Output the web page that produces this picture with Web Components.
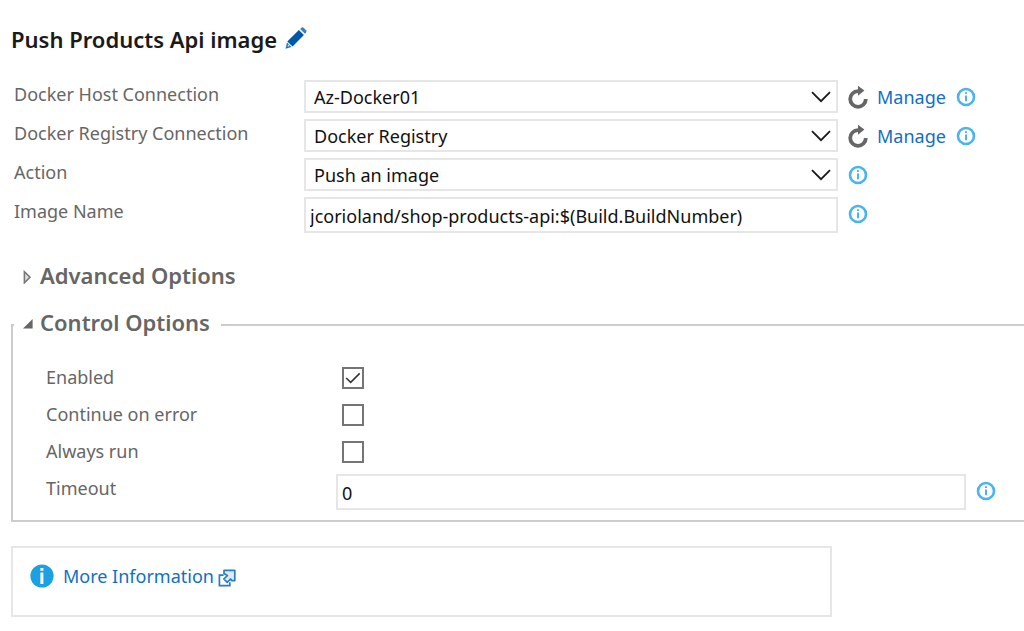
<!DOCTYPE html>
<html lang="en">
<head>
<meta charset="utf-8">
<title>Push Products Api image</title>
<style>
  body {
    margin: 0;
    background: #fff;
    color: #666;
    font: 18px/26px "Noto Sans", "Open Sans", sans-serif;
  }
</style>
</head>
<body>
<task-editor></task-editor>

<script>
  function define(name, template) {
    customElements.define(name, class extends HTMLElement {
      constructor() {
        super();
        this.attachShadow({ mode: "open" }).innerHTML =
          typeof template === "function" ? template(this) : template;
      }
    });
  }

  /* Outlined help button shown after a field */
  define("info-tip", `
    <style>
      :host { display: block; height: 20px; }
      button { display: block; width: 20px; height: 20px; padding: 0; border: 0; background: none; }
      svg { display: block; }
    </style>
    <button type="button" aria-label="Help">
      <svg width="20" height="20" viewBox="0 0 20 20">
        <circle cx="10" cy="10" r="8" fill="none" stroke="#4ab4ec" stroke-width="2.6"/>
        <path d="M9 5.2h2v1.8H9zM9 8.6h2v5.6H9z" fill="#4ab4ec"/>
      </svg>
    </button>`);

  define("manage-link", `
    <style>
      :host { display: flex; align-items: center; gap: 9px; padding-top: 4px; }
      button { display: block; padding: 0; border: 0; background: none; }
      svg { display: block; }
      a { color: #0f6fc9; text-decoration: none; line-height: 26px; }
    </style>
    <button type="button" aria-label="Refresh">
      <svg width="20" height="24" viewBox="0 0 20 24">
        <path d="M10 6.2A7.8 7.8 0 1 0 17.8 14" fill="none" stroke="#666" stroke-width="3.8"/>
        <path d="M10 .8v10l6.4-5.2z" fill="#666"/>
      </svg>
    </button>
    <a href="#manage"><slot></slot></a>`);

  define("field-row", el => {
    const label = el.getAttribute("label");
    const value = el.getAttribute("value");
    const control = el.hasAttribute("select")
      ? `<div class="select"><select id="control"><option>${value}</option></select>
           <svg width="20" height="12" viewBox="0 0 20 12"><path d="M1 1.2l9 9 9-9" fill="none" stroke="#1a1a1a" stroke-width="1.8"/></svg>
         </div>`
      : `<input id="control" type="text" value="${value}">`;
    return `
    <style>
      :host {
        display: grid;
        grid-template-columns: 290px minmax(0, 1fr) var(--aside-width, 176px);
        align-items: start;
      }
      label { line-height: 28px; }
      select, input {
        display: block; box-sizing: border-box; width: 100%; margin: 0;
        border: 2px solid #e6e6e6; border-radius: 0; background: #fff;
        color: #111; font: inherit; outline: 0;
      }
      select { appearance: none; height: 33px; padding: 1px 36px 0 8px; line-height: 26px; }
      input { height: 36px; padding: 2px 4px 0; line-height: 26px; }
      .select { display: grid; }
      .select > * { grid-area: 1 / 1; }
      svg { place-self: center end; margin-right: 7px; pointer-events: none; }
      .aside { display: flex; align-items: flex-start; gap: 10px; padding-left: 10px; }
      slot[name=tip]::slotted(*) { margin-top: 7px; }
    </style>
    <label for="control">${label}</label>
    ${control}
    <div class="aside"><slot></slot><slot name="tip"></slot></div>`;
  });

  define("check-row", el => `
    <style>
      :host { display: grid; grid-template-columns: 296px 1fr; align-items: start; }
      label { line-height: 28px; }
      .box { display: grid; width: 22px; height: 22px; margin-top: 4px; }
      .box > * { grid-area: 1 / 1; }
      input { appearance: none; box-sizing: border-box; width: 22px; height: 22px; margin: 0; border: 2px solid #757575; background: #fff; }
      svg { display: none; pointer-events: none; }
      input:checked + svg { display: block; }
    </style>
    <label for="check">${el.getAttribute("label")}</label>
    <div class="box">
      <input id="check" type="checkbox"${el.hasAttribute("checked") ? " checked" : ""}>
      <svg width="22" height="22" viewBox="0 0 22 22"><path d="M4.2 11l4.5 4.4 9-9" fill="none" stroke="#333" stroke-width="1.5"/></svg>
    </div>`);

  define("task-title", `
    <style>
      :host { display: flex; align-items: center; gap: 8px; color: #1a1a1a; }
      h1 { margin: 0; font-size: 22px; line-height: 30px; font-weight: 600; }
      button { display: block; padding: 0; border: 0; background: none; }
      svg { display: block; }
    </style>
    <h1><slot></slot></h1>
    <button type="button" aria-label="Rename">
      <svg width="22" height="26" viewBox="0 0 22 26">
        <path d="M13.9 4.1l5 4.9L7.6 20.6l-5.3-5z" fill="#0058a8"/>
        <path d="M15.1 2.9l1.4-1.2q1-.8 2 0l2.6 2.6q.8 1 0 2l-1.2 1.4z" fill="#3f7fbb"/>
        <path d="M2 16.5L.5 22.7l6-1.8z" fill="#2a70b2"/>
        <path d="M3 18.2l1.9 1.9-2.4.7z" fill="#cfe0ef"/>
      </svg>
    </button>`);

  define("section-toggle", el => `
    <style>
      :host { display: block; }
      button {
        display: flex; align-items: center; gap: 7px; padding: 0; border: 0; background: none;
        color: #666; font: inherit; font-size: 22px; line-height: 30px; font-weight: 600;
      }
      svg { display: block; margin-top: 4px; }
    </style>
    <button type="button" aria-expanded="${el.hasAttribute("open")}">
      <svg width="10" height="14" viewBox="0 0 10 14">${el.hasAttribute("open")
        ? `<path d="M9.6 2v9.6H0z" fill="#666"/>`
        : `<path d="M1.4 1.8v11L7 7.3z" fill="#ddd" stroke="#777" stroke-width="1.6"/>`}</svg>
      <slot></slot>
    </button>`);

  define("options-group", `
    <style>
      :host { display: block; }
      fieldset { min-width: 0; margin: 0; padding: 21px 18px 10px 33px; border: 2px solid #ccc; border-right: 0; }
      legend { margin-left: -32px; padding: 0 11px 5px 9px; }
    </style>
    <fieldset>
      <legend><slot name="legend"></slot></legend>
      <slot></slot>
    </fieldset>`);

  define("info-card", `
    <style>
      :host { display: flex; align-items: flex-start; gap: 9px; box-sizing: border-box; max-width: 821px; min-height: 71px; padding: 15px 17px; border: 2px solid #e6e6e6; }
      svg { display: block; flex: none; }
      .badge { margin-top: 1px; }
      a { display: flex; align-items: center; gap: 4px; color: #0f6fc9; text-decoration: none; line-height: 26px; }
      a svg { margin-top: 4px; }
    </style>
    <svg class="badge" width="24" height="24" viewBox="0 0 24 24">
      <circle cx="12" cy="12" r="11.6" fill="#1ba1e2"/>
      <path d="M10.4 4h3v2.8h-3zM10.4 8.6h3V20h-3z" fill="#fff"/>
    </svg>
    <a href="#more"><slot></slot>
      <svg width="18" height="18" viewBox="0 0 18 18" fill="none" stroke="#2a7cc4" stroke-width="1.7">
        <path d="M5.6 6.2H1.4v10.4h10.4v-3.4"/>
        <path d="M6 1.4h10.8v10.2h-3l-1.3-1.6-3.3 3.4-3.4-3.4 3.6-3.4L6 4.6z" fill="#dcebf7" stroke-linejoin="round"/>
      </svg>
    </a>`);

  define("task-editor", `
    <style>
      :host { display: block; padding: 24px 0 14px 11px; overflow-x: hidden; }
      .fields { display: grid; gap: 6px; margin: 26px 10px 0 3px; }
      .advanced { margin: 27px 0 0 12px; }
      options-group { margin-top: 17px; }
      .checks { display: grid; gap: 9px; }
      .timeout { --aside-width: 40px; margin-top: 9px; }
      info-card { margin-top: 24px; }
    </style>
    <main>
      <task-title>Push Products Api image</task-title>
      <div class="fields">
        <field-row select label="Docker Host Connection" value="Az-Docker01">
          <manage-link>Manage</manage-link><info-tip slot="tip"></info-tip>
        </field-row>
        <field-row select label="Docker Registry Connection" value="Docker Registry">
          <manage-link>Manage</manage-link><info-tip slot="tip"></info-tip>
        </field-row>
        <field-row select label="Action" value="Push an image"><info-tip slot="tip"></info-tip></field-row>
        <field-row label="Image Name" value="jcorioland/shop-products-api:$(Build.BuildNumber)"><info-tip slot="tip"></info-tip></field-row>
      </div>
      <section-toggle class="advanced">Advanced Options</section-toggle>
      <options-group>
        <section-toggle slot="legend" open>Control Options</section-toggle>
        <div class="checks">
          <check-row label="Enabled" checked></check-row>
          <check-row label="Continue on error"></check-row>
          <check-row label="Always run"></check-row>
        </div>
        <field-row class="timeout" label="Timeout" value="0"><info-tip slot="tip"></info-tip></field-row>
      </options-group>
      <info-card>More Information</info-card>
    </main>`);
</script>
</body>
</html>
